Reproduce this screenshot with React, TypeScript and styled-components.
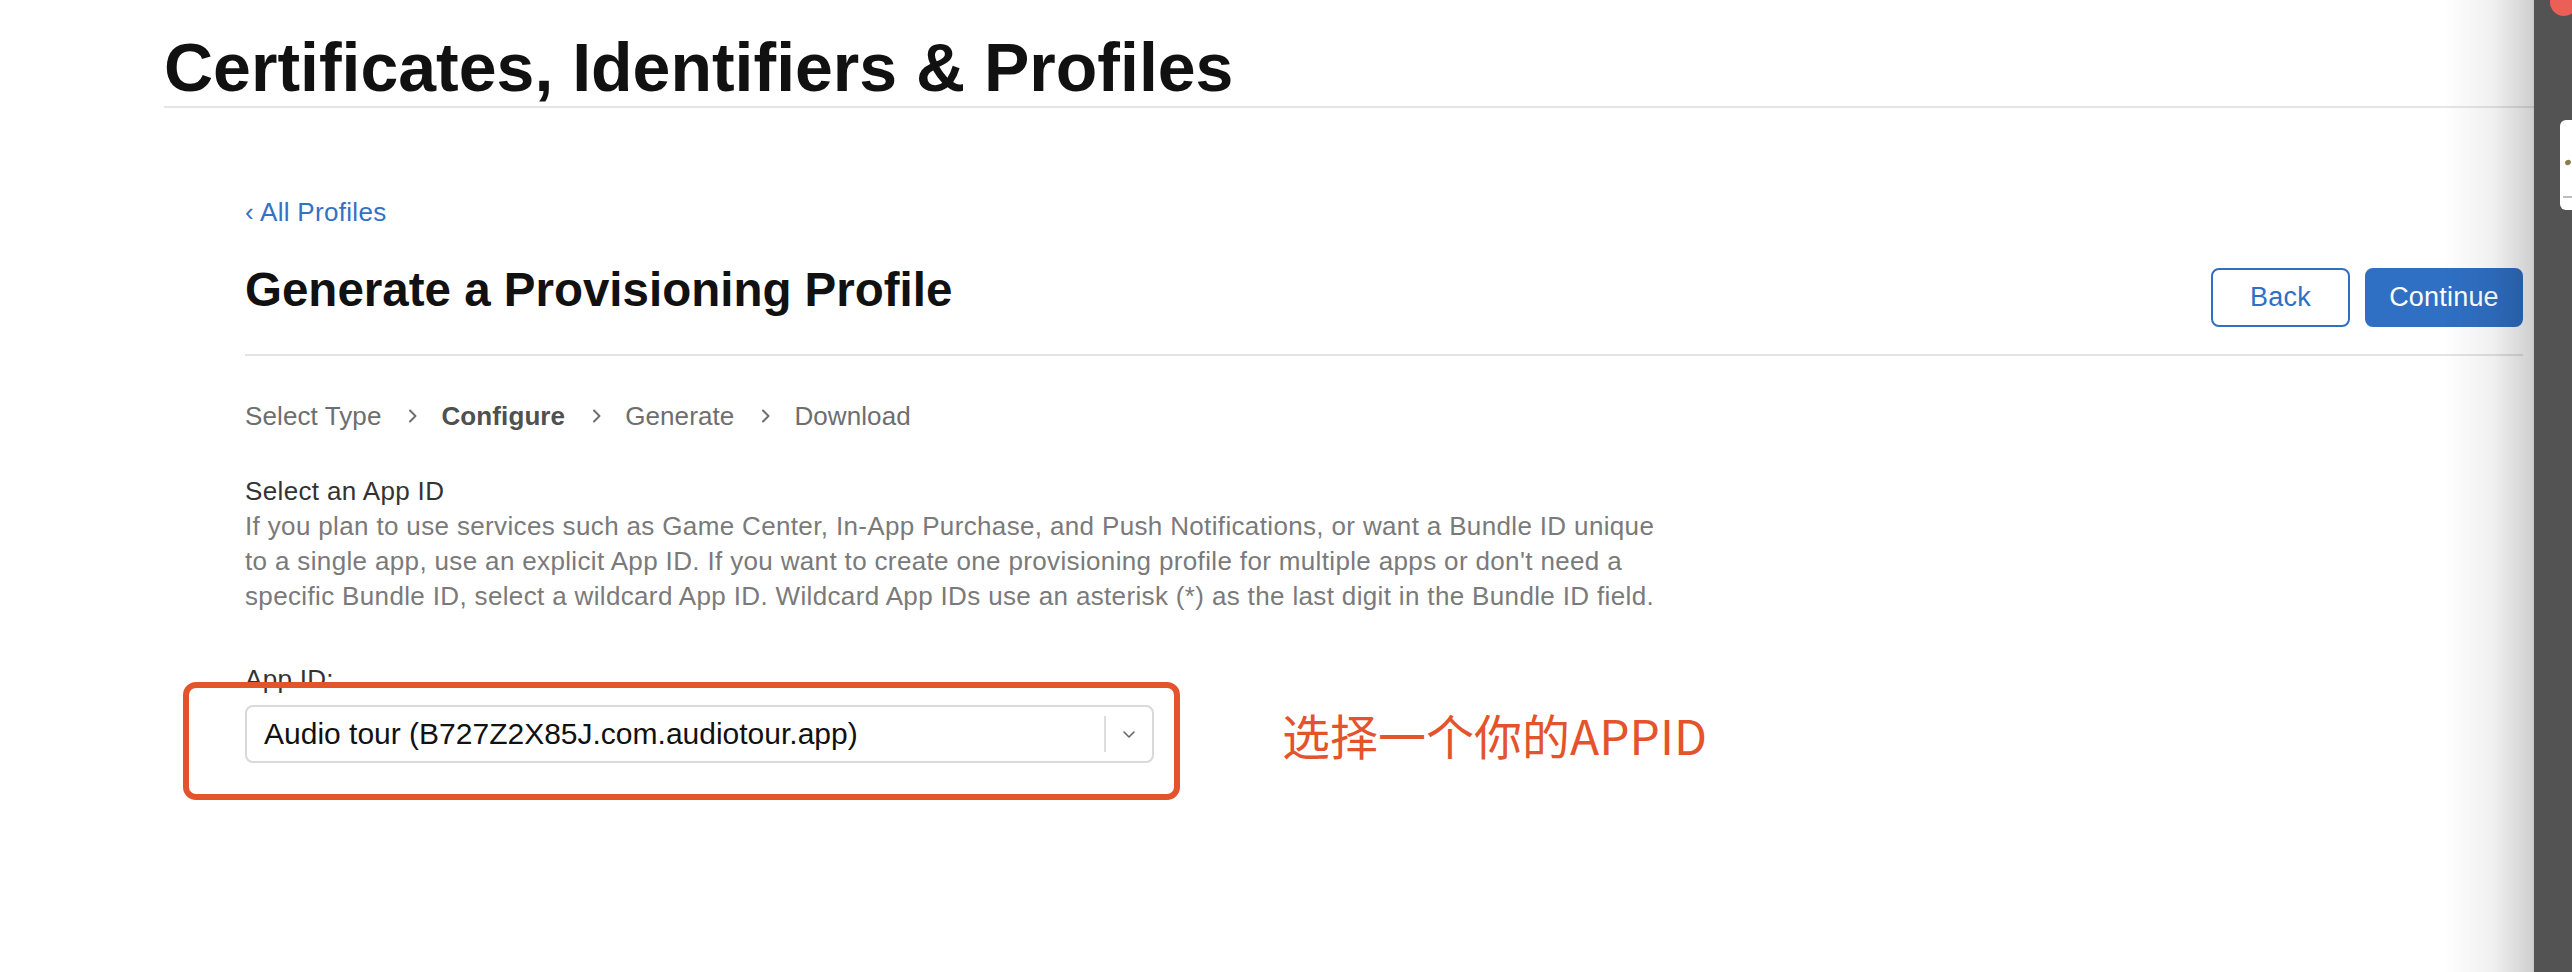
import React from "react";
import styled, { createGlobalStyle } from "styled-components";

const GlobalStyle = createGlobalStyle`
  html, body {
    margin: 0;
    padding: 0;
    background: #ffffff;
  }
  body {
    font-family: "Liberation Sans", Arial, sans-serif;
    color: #1d1d1f;
  }
  * { box-sizing: border-box; }
`;

const Frame = styled.div`
  display: flex;
  width: 2572px;
  height: 972px;
  overflow: hidden;
`;

const Main = styled.main`
  position: relative;
  flex: 1;
  display: flex;
  flex-direction: column;
  background: #ffffff;
  overflow: hidden;
`;

const EdgeShade = styled.div`
  position: absolute;
  top: 0;
  right: 0;
  width: 90px;
  height: 100%;
  pointer-events: none;
  background: linear-gradient(to right, rgba(0, 0, 0, 0) 0%, rgba(0, 0, 0, 0.06) 55%, rgba(0, 0, 0, 0.19) 100%);
  border-right: 1px solid rgba(0, 0, 0, 0.22);
`;

const Header = styled.header`
  margin-left: 164px;
  padding: 33px 0 5px 0;
  border-bottom: 2px solid #e6e6e6;
`;

const Title = styled.h1`
  margin: 0;
  font-family: "Liberation Sans", Arial, sans-serif;
  font-weight: 700;
  font-size: 68px;
  line-height: 68px;
  color: #111111;
`;

const Content = styled.section`
  display: flex;
  flex-direction: column;
  padding: 86.5px 11px 0 245px;
  letter-spacing: 0.3px;
`;

const BackLink = styled.a`
  font-size: 26px;
  line-height: 35px;
  color: #3271c4;
  text-decoration: none;
  align-self: flex-start;
`;

const HeadRow = styled.div`
  display: flex;
  justify-content: space-between;
  align-items: flex-start;
  margin-top: 36.5px;
  padding-bottom: 27px;
  border-bottom: 2px solid #e3e3e3;
`;

const Heading = styled.h2`
  margin: 0;
  font-weight: 700;
  font-size: 47.5px;
  line-height: 48px;
  letter-spacing: 0;
  color: #111111;
`;

const Buttons = styled.div`
  display: flex;
  gap: 15px;
  margin-top: 2px;
`;

const Button = styled.button<{ $primary?: boolean }>`
  height: 59px;
  width: ${(p) => (p.$primary ? "158px" : "139px")};
  border-radius: 8px;
  border: 2px solid #2f6fc4;
  background: ${(p) => (p.$primary ? "#2f6fc4" : "#ffffff")};
  color: ${(p) => (p.$primary ? "#ffffff" : "#2f6fc4")};
  font-family: "Liberation Sans", Arial, sans-serif;
  font-size: 27px;
  letter-spacing: 0.2px;
  padding: 0;
  cursor: pointer;
`;

const Crumbs = styled.nav`
  display: flex;
  align-items: center;
  margin-top: 42.5px;
  height: 35px;
  letter-spacing: 0.1px;
`;

const Crumb = styled.span<{ $active?: boolean }>`
  font-size: 26px;
  line-height: 35px;
  color: ${(p) => (p.$active ? "#505050" : "#6e6e6e")};
  font-weight: ${(p) => (p.$active ? 700 : 400)};
`;

const Chevron = styled.svg`
  width: 10px;
  height: 16px;
  margin: 0 23px 0 27px;
  flex: none;
`;

const Section = styled.div`
  margin-top: 40px;
  font-size: 26px;
  line-height: 35px;
  letter-spacing: 0.35px;
`;

const SectionTitle = styled.div`
  color: #333333;
`;

const SectionText = styled.p`
  margin: 0;
  color: #7a7a7a;
  white-space: nowrap;
`;

const TextLine = styled.span`
  display: block;
`;

const Field = styled.div`
  position: relative;
  margin-top: 48px;
`;

const FieldLabel = styled.label`
  display: block;
  font-size: 26px;
  line-height: 35px;
  color: #333333;
`;

const FieldRow = styled.div`
  display: flex;
  align-items: center;
  margin-top: 8.5px;
`;

const Select = styled.div`
  display: flex;
  align-items: center;
  width: 909px;
  height: 58px;
  border: 2px solid #d9d9d9;
  border-radius: 8px;
  padding-left: 17px;
  background: #ffffff;
`;

const SelectValue = styled.span`
  flex: 1;
  font-size: 30px;
  letter-spacing: 0;
  color: #111111;
  white-space: nowrap;
`;

const SelectDivider = styled.span`
  width: 2px;
  height: 36px;
  background: #dddddd;
`;

const SelectCaret = styled.span`
  display: flex;
  align-items: center;
  justify-content: center;
  width: 46px;
  height: 100%;
`;

const Annotation = styled.span`
  margin-left: 128px;
  font-family: "Noto Sans CJK SC", "Noto Sans", sans-serif;
  font-size: 48px;
  line-height: 48px;
  letter-spacing: 0;
  color: #e4542c;
  white-space: nowrap;
`;

const Highlight = styled.div`
  position: absolute;
  left: -62px;
  top: 20.5px;
  width: 997px;
  height: 118px;
  border: 6px solid #e4542c;
  border-radius: 13px;
  pointer-events: none;
`;

const Side = styled.aside`
  position: relative;
  width: 38px;
  flex: none;
  background: #535353;
  overflow: hidden;
`;

const CloseDot = styled.span`
  position: absolute;
  left: 16px;
  top: -12px;
  width: 28px;
  height: 28px;
  border-radius: 50%;
  background: #ec5f57;
`;

const Thumb = styled.div`
  position: absolute;
  left: 26px;
  top: 120px;
  width: 30px;
  height: 90px;
  border-radius: 6px;
  background: #ffffff;
`;

const ThumbLeaf = styled.span`
  position: absolute;
  left: 5px;
  top: 40px;
  width: 6px;
  height: 5px;
  border-radius: 50%;
  background: #8b7d4a;
  transform: rotate(-30deg);
`;

const ThumbRule = styled.span`
  position: absolute;
  left: 3px;
  top: 76px;
  width: 20px;
  height: 2px;
  background: #bdbdbd;
`;

const ChevronIcon = () => (
  <Chevron viewBox="0 0 10 16" aria-hidden="true">
    <path d="M2 2.5 L7.5 8 L2 13.5" fill="none" stroke="#6e6e6e" strokeWidth="2" strokeLinecap="round" strokeLinejoin="round" />
  </Chevron>
);

const steps = ["Select Type", "Configure", "Generate", "Download"];

export default function App() {
  return (
    <>
      <GlobalStyle />
      <Frame>
        <Main>
          <Header>
            <Title>Certificates, Identifiers &amp; Profiles</Title>
          </Header>
          <Content>
            <BackLink href="#">‹ All Profiles</BackLink>
            <HeadRow>
              <Heading>Generate a Provisioning Profile</Heading>
              <Buttons>
                <Button>Back</Button>
                <Button $primary>Continue</Button>
              </Buttons>
            </HeadRow>
            <Crumbs>
              {steps.map((s, i) => (
                <React.Fragment key={s}>
                  {i > 0 && <ChevronIcon />}
                  <Crumb $active={s === "Configure"}>{s}</Crumb>
                </React.Fragment>
              ))}
            </Crumbs>
            <Section>
              <SectionTitle>Select an App ID</SectionTitle>
              <SectionText>
                <TextLine>If you plan to use services such as Game Center, In-App Purchase, and Push Notifications, or want a Bundle ID unique</TextLine>
                <TextLine>to a single app, use an explicit App ID. If you want to create one provisioning profile for multiple apps or don't need a</TextLine>
                <TextLine>specific Bundle ID, select a wildcard App ID. Wildcard App IDs use an asterisk (*) as the last digit in the Bundle ID field.</TextLine>
              </SectionText>
            </Section>
            <Field>
              <FieldLabel>App ID:</FieldLabel>
              <FieldRow>
                <Select>
                  <SelectValue>Audio tour (B727Z2X85J.com.audiotour.app)</SelectValue>
                  <SelectDivider />
                  <SelectCaret>
                    <svg width="14" height="9" viewBox="0 0 14 9" aria-hidden="true">
                      <path d="M2 2 L7 7 L12 2" fill="none" stroke="#666" strokeWidth="1.6" strokeLinecap="round" strokeLinejoin="round" />
                    </svg>
                  </SelectCaret>
                </Select>
                <Annotation>选择一个你的APPID</Annotation>
              </FieldRow>
              <Highlight />
            </Field>
          </Content>
          <EdgeShade />
        </Main>
        <Side>
          <CloseDot />
          <Thumb>
            <ThumbLeaf />
            <ThumbRule />
          </Thumb>
        </Side>
      </Frame>
    </>
  );
}
